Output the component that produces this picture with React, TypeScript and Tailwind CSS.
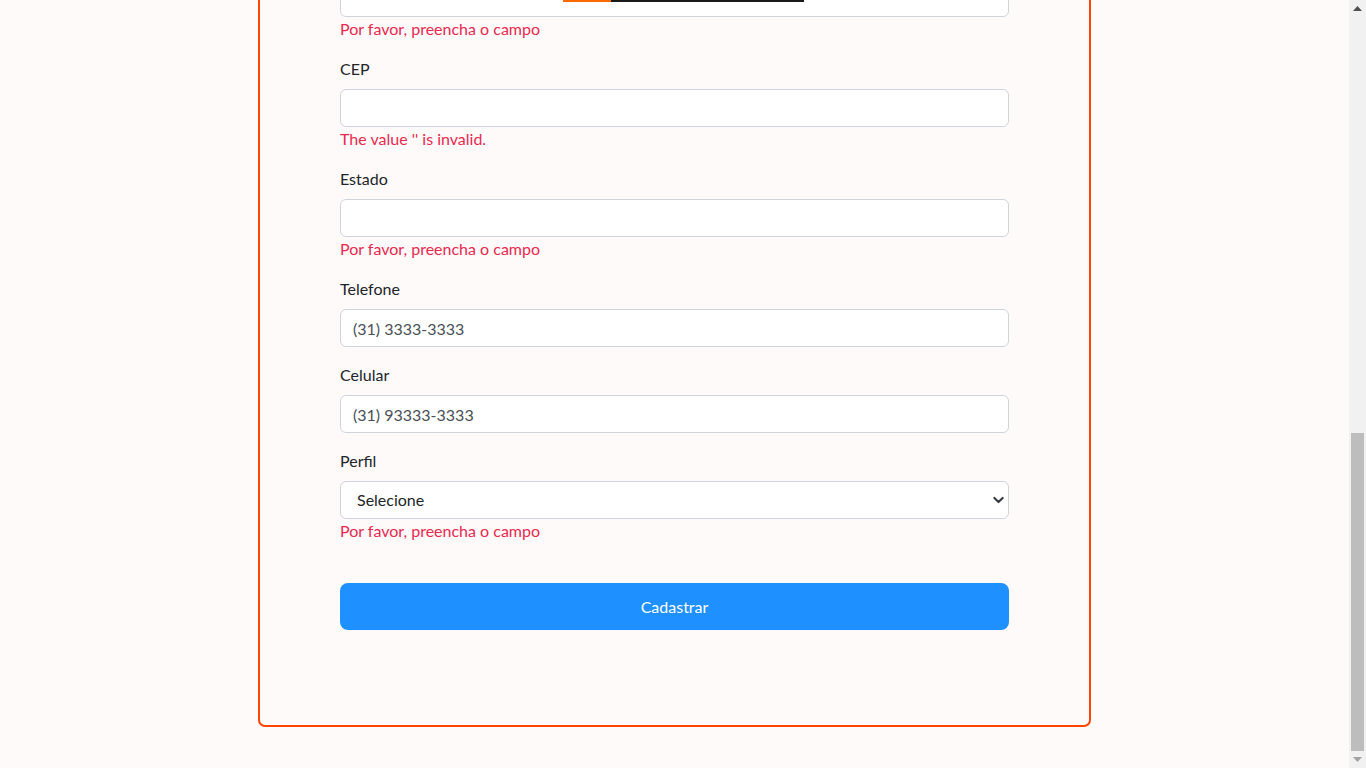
type Field = {
  label: string;
  value?: string;
  error?: string;
  bar?: boolean;
};

const MSG = "Por favor, preencha o campo";

const fields: Field[] = [
  { label: "Nome", error: MSG },
  { label: "CPF", error: MSG },
  { label: "Email", error: MSG },
  { label: "Senha", error: MSG },
  { label: "Confirmar senha", error: MSG },
  { label: "Data de nascimento" },
  { label: "Endereço" },
  { label: "Número" },
  { label: "Cidade", error: MSG, bar: true },
  { label: "CEP", error: "The value '' is invalid." },
  { label: "Estado", error: MSG },
  { label: "Telefone", value: "(31) 3333-3333" },
  { label: "Celular", value: "(31) 93333-3333" },
];

function FormField({ field }: { field: Field }) {
  return (
    <div className="mb-4">
      <label className="mb-2 block text-base leading-6 text-[#212529]">{field.label}</label>
      <div className="relative">
        <input
          type="text"
          defaultValue={field.value}
          className="block h-[38px] w-full rounded-[6px] border border-[#ced4da] bg-white px-3 text-base text-[#495057] outline-none"
        />
        {field.bar && (
          <div className="absolute top-[21px] left-[223px] flex h-[2px]">
            <div className="w-12 bg-[#ff6a00]" />
            <div className="w-[193px] bg-[#1a1a1a]" />
          </div>
        )}
      </div>
      {field.error && <div className="text-base leading-6 text-[#e8294f]">{field.error}</div>}
    </div>
  );
}

function Scrollbar() {
  return (
    <div className="flex w-[17px] shrink-0 flex-col bg-[#f1f1f1]">
      <div className="flex h-[17px] items-center justify-center">
        <svg width="9" height="5" viewBox="0 0 9 5">
          <path d="M0 5 4.5 0 9 5Z" fill="#505050" />
        </svg>
      </div>
      <div className="flex flex-1 flex-col justify-end px-[2px]">
        <div className="h-[318px] bg-[#bdbdbd]" />
      </div>
      <div className="flex h-[17px] items-center justify-center">
        <svg width="9" height="5" viewBox="0 0 9 5">
          <path d="M0 0 9 0 4.5 5Z" fill="#a3a3a3" />
        </svg>
      </div>
    </div>
  );
}

export default function App() {
  return (
    <div className="flex h-screen bg-[#fffafa] font-['Lato',sans-serif]">
      <div className="flex min-w-0 flex-1 flex-col justify-end overflow-hidden">
        <div className="pt-10 pb-[41px]">
          <div className="mx-auto w-[833px] rounded-[7px] border-2 border-[#ff4500] px-20 pt-10 pb-[95px]">
            <h2 className="mb-[21px] text-center text-[32px] leading-10 font-medium text-[#212529]">
              Cadastro de Usuário
            </h2>
            {fields.map((f) => (
              <FormField key={f.label} field={f} />
            ))}
            <div className="mb-4">
              <label className="mb-2 block text-base leading-6 text-[#212529]">Perfil</label>
              <div className="relative">
                <select className="block h-[38px] w-full appearance-none rounded-[6px] border border-[#ced4da] bg-white pr-9 pl-4 text-base text-[#212529] outline-none">
                  <option>Selecione</option>
                  <option>Administrador</option>
                  <option>Usuário</option>
                </select>
                <svg
                  className="pointer-events-none absolute top-1/2 right-[5px] h-[11px] w-[11px] -translate-y-1/2"
                  viewBox="0 0 16 16"
                >
                  <path d="M2 5 8 11l6-6" fill="none" stroke="#343a40" strokeWidth="3" strokeLinecap="round" strokeLinejoin="round" />
                </svg>
              </div>
              <div className="text-base leading-6 text-[#e8294f]">{MSG}</div>
            </div>
            <button className="mt-6 h-[47px] w-full rounded-lg bg-[#1e90ff] text-base text-white">
              Cadastrar
            </button>
          </div>
        </div>
      </div>
      <Scrollbar />
    </div>
  );
}
